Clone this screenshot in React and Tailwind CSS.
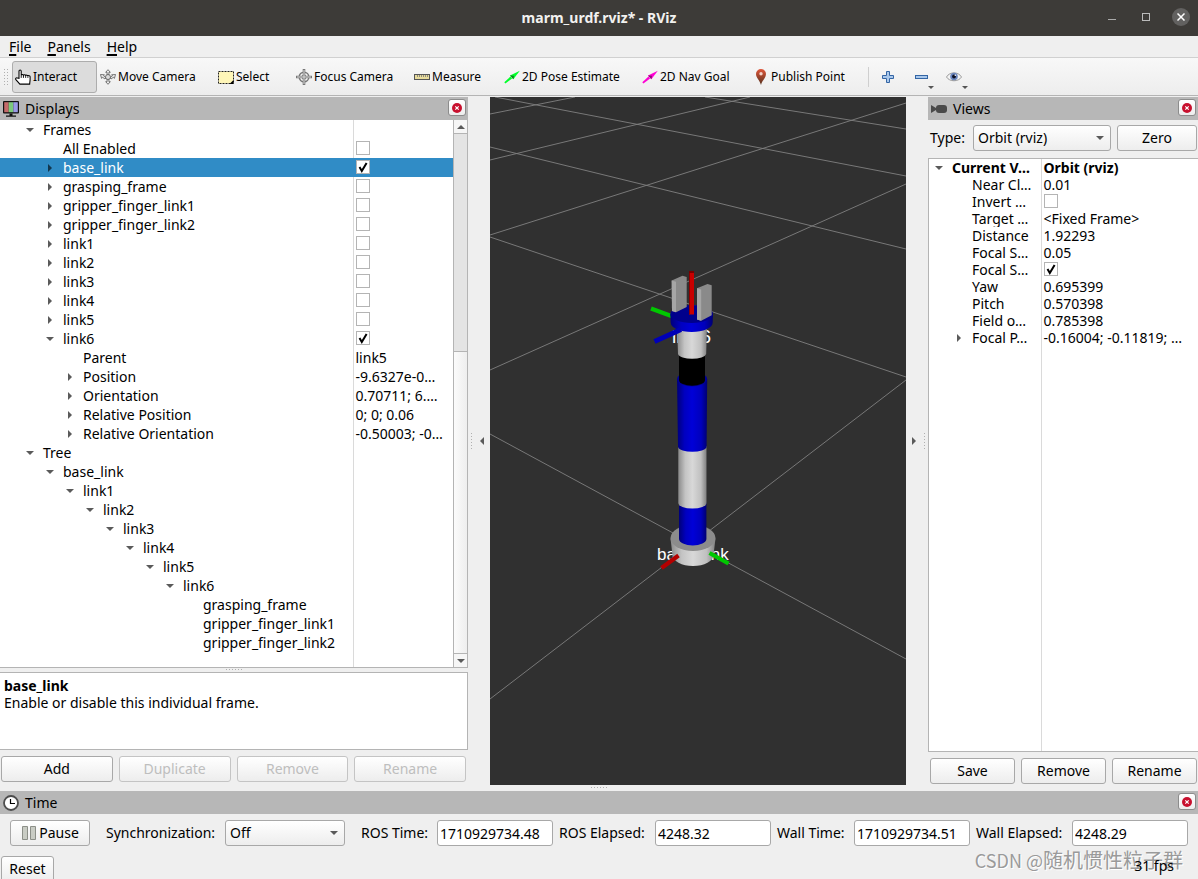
import React from "react";
import clsx from "clsx";

const frames = [
  { name: "Frames", depth: 0, arrow: "down" },
  { name: "All Enabled", depth: 1, check: false },
  { name: "base_link", depth: 1, arrow: "right", check: true, selected: true },
  { name: "grasping_frame", depth: 1, arrow: "right", check: false },
  { name: "gripper_finger_link1", depth: 1, arrow: "right", check: false },
  { name: "gripper_finger_link2", depth: 1, arrow: "right", check: false },
  { name: "link1", depth: 1, arrow: "right", check: false },
  { name: "link2", depth: 1, arrow: "right", check: false },
  { name: "link3", depth: 1, arrow: "right", check: false },
  { name: "link4", depth: 1, arrow: "right", check: false },
  { name: "link5", depth: 1, arrow: "right", check: false },
  { name: "link6", depth: 1, arrow: "down", check: true },
  { name: "Parent", depth: 2, value: "link5" },
  { name: "Position", depth: 2, arrow: "right", value: "-9.6327e-0…" },
  { name: "Orientation", depth: 2, arrow: "right", value: "0.70711; 6.…" },
  { name: "Relative Position", depth: 2, arrow: "right", value: "0; 0; 0.06" },
  {
    name: "Relative Orientation",
    depth: 2,
    arrow: "right",
    value: "-0.50003; -0…",
  },
  { name: "Tree", depth: 0, arrow: "down" },
  { name: "base_link", depth: 1, arrow: "down" },
  { name: "link1", depth: 2, arrow: "down" },
  { name: "link2", depth: 3, arrow: "down" },
  { name: "link3", depth: 4, arrow: "down" },
  { name: "link4", depth: 5, arrow: "down" },
  { name: "link5", depth: 6, arrow: "down" },
  { name: "link6", depth: 7, arrow: "down" },
  { name: "grasping_frame", depth: 8 },
  { name: "gripper_finger_link1", depth: 8 },
  { name: "gripper_finger_link2", depth: 8 },
];

const viewProps = [
  {
    name: "Current V…",
    depth: 0,
    arrow: "down",
    value: "Orbit (rviz)",
    bold: true,
  },
  { name: "Near Cl…", depth: 1, value: "0.01" },
  { name: "Invert …", depth: 1, check: false },
  { name: "Target …", depth: 1, value: "<Fixed Frame>" },
  { name: "Distance", depth: 1, value: "1.92293" },
  { name: "Focal S…", depth: 1, value: "0.05" },
  { name: "Focal S…", depth: 1, check: true },
  { name: "Yaw", depth: 1, value: "0.695399" },
  { name: "Pitch", depth: 1, value: "0.570398" },
  { name: "Field o…", depth: 1, value: "0.785398" },
  {
    name: "Focal P…",
    depth: 1,
    arrow: "right",
    value: "-0.16004; -0.11819; …",
  },
];

const indents = [
  "pl-0",
  "pl-5",
  "pl-10",
  "pl-15",
  "pl-20",
  "pl-25",
  "pl-30",
  "pl-35",
  "pl-40",
];

const Arrow = ({ dir = "down", className = "fill-[#5a5a5a]" }) => {
  const d = {
    down: "M3 5h8l-4 4z",
    up: "M3 9h8l-4-4z",
    right: "M5 3v8l4-4z",
    left: "M9 3v8l-4-4z",
  }[dir];
  return (
    <svg viewBox="0 0 14 14" className={clsx("size-3.5 shrink-0", className)}>
      <path d={d} />
    </svg>
  );
};

const CheckBox = ({ label, checked, className }) => (
  <label className={clsx("relative block size-3.5", className)}>
    <input
      type="checkbox"
      aria-label={label}
      defaultChecked={checked}
      className="peer block size-3.5 appearance-none border border-[#b4b4b4] bg-white"
    />
    <svg
      viewBox="0 0 14 14"
      className="pointer-events-none absolute inset-0 hidden size-3.5 peer-checked:block"
    >
      <path
        d="M3.5 7l2.3 4L10.6 3"
        fill="none"
        stroke="#000"
        strokeWidth="2"
      />
    </svg>
  </label>
);

const Grip = ({ vertical }) => (
  <svg
    viewBox={vertical ? "0 0 2 18" : "0 0 18 2"}
    className={clsx("fill-[#b0b0b0]", vertical ? "h-[18px] w-0.5" : "h-0.5 w-[18px]")}
  >
    {[1, 4, 7, 10, 13, 16].map((p) => (
      <rect
        key={p}
        x={vertical ? 0 : p}
        y={vertical ? p : 0}
        width="1"
        height="1"
      />
    ))}
  </svg>
);

const PropertyTree = ({ label, rows, nameCol, lead, rowClass, boxClass }) => (
  <table
    aria-label={label}
    className="h-full w-full table-fixed border-collapse"
  >
    <colgroup>
      <col className={nameCol} />
      <col />
    </colgroup>
    <tbody>
      {rows.map((r, i) => (
        <tr
          key={i}
          className={clsx(rowClass, r.selected && "bg-[#308cc6] text-white")}
        >
          <td
            className={clsx(
              "overflow-hidden border-r p-0 whitespace-nowrap",
              r.selected ? "border-[#308cc6]" : "border-[#dadada]",
              lead,
            )}
          >
            <div className={clsx("flex items-center", indents[r.depth])}>
              <span className="mr-1.5 w-3.5 shrink-0">
                {r.arrow && (
                  <Arrow
                    dir={r.arrow}
                    className={r.selected ? "fill-[#12374f]" : "fill-[#5a5a5a]"}
                  />
                )}
              </span>
              <span className={r.bold ? "font-bold" : ""}>{r.name}</span>
            </div>
          </td>
          <td
            className={clsx(
              "overflow-hidden p-0 pl-0.5 align-top whitespace-nowrap",
              r.bold && "font-bold",
            )}
          >
            {r.value}
            {r.check !== undefined && (
              <CheckBox
                label={r.name}
                checked={r.check}
                className={boxClass}
              />
            )}
          </td>
        </tr>
      ))}
      <tr>
        <td className="border-r border-[#dadada] p-0" />
        <td className="p-0" />
      </tr>
    </tbody>
  </table>
);

const Button = ({ children, className, disabled }) => (
  <button
    disabled={disabled}
    className={clsx(
      "flex h-[26px] items-center justify-center rounded-[3px] border bg-linear-to-b from-white to-[#ededed]",
      disabled ? "border-[#c4c4c4] text-[#bebebe]" : "border-[#a8a8a8]",
      className,
    )}
  >
    {children}
  </button>
);

const Select = ({ id, value, className }) => (
  <div className={clsx("relative", className)}>
    <select
      id={id}
      className="h-[26px] w-full appearance-none rounded-[3px] border border-[#a8a8a8] bg-linear-to-b from-white to-[#ededed] pl-1"
    >
      <option>{value}</option>
    </select>
    <span className="pointer-events-none absolute top-1.5 right-1">
      <Arrow />
    </span>
  </div>
);

const DockHeader = ({ icon, title }) => (
  <div className="flex h-[23px] shrink-0 items-center bg-[#b7b7b7] pr-0.5 pl-[3px]">
    {icon}
    <h2 className="ml-1.5 flex-1">{title}</h2>
    <button
      aria-label={`Close ${title}`}
      className="mb-0.5 flex h-[17px] w-[18px] items-center justify-center rounded-[3px] border border-[#8c8c8c] bg-linear-to-b from-white to-[#ededed]"
    >
      <svg viewBox="0 0 10 10" className="size-2.5">
        <circle cx="5" cy="5" r="5" fill="#c8102e" />
        <path d="M3.3 3.3l3.4 3.4M6.7 3.3L3.3 6.7" stroke="#fff" strokeWidth="1.2" />
      </svg>
    </button>
  </div>
);

const HandIcon = () => (
  <svg viewBox="0 0 18 18" className="size-4">
    <path
      d="M4.5 10.500V2.500C4.500 .8 7 .8 7 2.500V7c.3-1 2.200-1 2.500 0 .4-.8 2.200-.6 2.500.3.5-.6 2.200-.5 2.500.4.600-.5 2.500-.2 2.500 1V12l-.5 5H5.500L1 12C.200 10.800 1.500 9.300 2.700 10.200z"
      fill="#fff"
      stroke="#000"
      strokeWidth="1.2"
    />
    <path d="M7 7v3M9.500 7.500v2.500M12 8v2M14.500 8.500v1.500" stroke="#000" />
  </svg>
);

const MoveIcon = () => (
  <svg viewBox="0 0 16 16" className="size-4" fill="none" stroke="#555">
    <path d="M8 .700l2.300 2.600H8.900v2.800h-1.800V3.300H5.700zM8 15.300l2.300-2.600H8.900V9.900h-1.800v2.800H5.700z" strokeWidth=".8" />
    <path d="M.500 5.500l4 .300-1 1 2.500 2-1 1.200-2.500-1.800-.9 1.200zM15.500 5.500l-4 .300 1 1-2.500 2 1 1.200 2.500-1.800.9 1.200z" strokeWidth=".8" />
    <circle cx="8" cy="8" r="2.500" fill="#ddd" strokeWidth=".8" />
  </svg>
);

const SelectIcon = () => (
  <svg viewBox="0 0 16 16" className="size-4">
    <rect x=".5" y="2.500" width="15" height="12" fill="#fff6b8" stroke="#222" strokeDasharray="2 1" />
    <path d="M15.500 11v4h-4z" />
  </svg>
);

const FocusIcon = () => (
  <svg viewBox="0 0 16 16" className="size-4" fill="none" stroke="#777">
    <circle cx="8" cy="8" r="4.800" strokeWidth="1.400" />
    <circle cx="8" cy="8" r="2" />
    <path d="M8 0v16M0 8h16" strokeWidth="2.600" />
    <path d="M8 1v14M1 8h14" stroke="#e2e2e2" strokeWidth=".9" />
  </svg>
);

const RulerIcon = () => (
  <svg viewBox="0 0 16 16" className="size-4">
    <rect x=".5" y="5.500" width="15" height="5" fill="#e8dc9c" stroke="#555" />
    <path d="M3.500 6v2M5.500 6v2M7.500 6v2M9.500 6v2M11.500 6v2M13.500 6v2" stroke="#777" strokeWidth=".8" />
  </svg>
);

const NeedleIcon = ({ color, dark }) => (
  <svg viewBox="0 0 16 16" className="size-4">
    <path d="M.300 13.300L6.500 7.500l1.600 2L1.400 14.600z" fill={color} />
    <path d="M6 6.500L15.800 1.700 9.400 10.300z" fill={color} />
    <path d="M6 6.500l3.400 3.800.6-3.600z" fill={dark} />
  </svg>
);

const PinIcon = () => (
  <svg viewBox="0 0 16 16" className="size-4">
    <defs>
      <linearGradient id="pin" x1="0" y1="0" x2="0" y2="1">
        <stop offset="0" stopColor="#e0563a" />
        <stop offset="1" stopColor="#54301c" />
      </linearGradient>
    </defs>
    <path d="M8 16C7 11.500 3 9 3 5a5 5 0 0 1 10 0c0 4-4 6.500-5 11z" fill="url(#pin)" />
    <circle cx="8" cy="4.800" r="1.700" fill="#f3d3cb" />
  </svg>
);

const tools = [
  { label: "Interact", icon: <HandIcon />, width: "w-[85px]", active: true },
  { label: "Move Camera", icon: <MoveIcon />, width: "w-[118px]" },
  { label: "Select", icon: <SelectIcon />, width: "w-[78px]" },
  { label: "Focus Camera", icon: <FocusIcon />, width: "w-[118px]" },
  { label: "Measure", icon: <RulerIcon />, width: "w-[90px]" },
  {
    label: "2D Pose Estimate",
    icon: <NeedleIcon color="#00ff2a" dark="#0a8a1c" />,
    width: "w-[138px]",
  },
  {
    label: "2D Nav Goal",
    icon: <NeedleIcon color="#ff00d4" dark="#8c0a76" />,
    width: "w-[111px]",
  },
  { label: "Publish Point", icon: <PinIcon />, width: "w-[115px]" },
];

const TitleBar = () => (
  <header className="grid h-9 shrink-0 grid-cols-[1fr_auto_1fr] items-center bg-[#3d3b38] text-white">
    <h1 className="col-start-2 text-sm font-bold text-[#f2f1ef]">
      marm_urdf.rviz* - RViz
    </h1>
    <div className="flex items-center justify-end gap-[18px] pr-2 pb-0.5">
      <button aria-label="Minimize" className="flex size-4 items-center justify-center">
        <svg viewBox="0 0 8 8" className="size-2">
          <path d="M0 6.500h8" stroke="#aaa" />
        </svg>
      </button>
      <button aria-label="Maximize" className="flex size-4 items-center justify-center">
        <svg viewBox="0 0 8 8" className="size-2">
          <rect x=".5" y=".5" width="7" height="7" fill="none" stroke="#bbb" />
        </svg>
      </button>
      <button
        aria-label="Close"
        className="flex size-[18px] items-center justify-center rounded-full bg-[#626160]"
      >
        <svg viewBox="0 0 8 8" className="size-2">
          <path d="M.5.5l7 7M7.500.5l-7 7" stroke="#fff" strokeWidth="1.500" />
        </svg>
      </button>
    </div>
  </header>
);

const MenuBar = () => (
  <nav className="flex h-[22px] shrink-0 items-center gap-4 border-b border-[#d0d0d0] pl-[9px]">
    {["File", "Panels", "Help"].map((m) => (
      <button key={m}>
        <span className="underline decoration-2 underline-offset-2">{m[0]}</span>
        {m.slice(1)}
      </button>
    ))}
  </nav>
);

const ToolBar = () => (
  <div className="flex h-[38px] shrink-0 items-center border-b border-[#b4b4b4] bg-linear-to-b from-[#f8f8f8] to-[#ededed] pl-1">
    <div className="mr-[3px] flex gap-[1px]">
      <Grip vertical />
      <Grip vertical />
    </div>
    {tools.map((t) => (
      <button
        key={t.label}
        className={clsx(
          "flex h-8 shrink-0 items-center gap-0.5 rounded-[3px] border pl-0.5 text-xs whitespace-nowrap",
          t.width,
          t.active ? "border-[#adadad] bg-[#dcdcdc]" : "border-transparent",
        )}
      >
        {t.icon}
        <span className="pt-px">{t.label}</span>
      </button>
    ))}
    <div className="mx-[3px] h-5 w-px bg-[#cfcfcf]" />
    <div className="flex pl-[9px]">
      <button aria-label="Add tool" className="mr-[19px] size-3.5">
        <svg viewBox="0 0 14 14">
          <path
            d="M5.500 1.500h3v4h4v3h-4v4h-3v-4h-4v-3h4z"
            fill="#a9c8ec"
            stroke="#3465a4"
          />
        </svg>
      </button>
      <button aria-label="Remove tool" className="relative mr-[18px] size-3.5">
        <svg viewBox="0 0 14 14">
          <rect x="1.500" y="5.500" width="12" height="3" fill="#a9c8ec" stroke="#3465a4" />
        </svg>
        <svg viewBox="0 0 6 3" className="absolute top-4 left-3.5 h-[3px] w-1.5">
          <path d="M0 0h6L3 3z" fill="#555" />
        </svg>
      </button>
      <button aria-label="Tool visibility" className="relative h-3.5 w-4">
        <svg viewBox="0 0 16 14">
          <path d="M.5 7C3.500 1.500 12.500 1.500 15.500 7c-3 5-12 5-15 0z" fill="#f4f4f4" stroke="#9a9a9a" />
          <circle cx="8" cy="6.500" r="3.800" fill="#6b86bd" />
          <circle cx="8" cy="6.500" r="1.900" fill="#0c0f24" />
          <circle cx="9.300" cy="5.200" r=".8" fill="#fff" />
        </svg>
        <svg viewBox="0 0 6 3" className="absolute top-4 left-4 h-[3px] w-1.5">
          <path d="M0 0h6L3 3z" fill="#555" />
        </svg>
      </button>
    </div>
  </div>
);

const MonitorIcon = () => (
  <svg viewBox="0 0 16 16" className="size-4">
    <rect width="16" height="12.500" rx="1" fill="#111" />
    <rect x="1.200" y="1.200" width="4.500" height="10" fill="#c46a6a" />
    <rect x="5.700" y="1.200" width="4.600" height="10" fill="#7cc97c" />
    <rect x="10.300" y="1.200" width="4.500" height="10" fill="#9a9ae6" />
    <path d="M6.500 12.500h3v2H13v1.300H3v-1.300h3.500z" fill="#111" />
  </svg>
);

const CameraIcon = () => (
  <svg viewBox="0 0 16 16" className="size-4 fill-[#4a4a4a]">
    <path d="M0 4l5 3v2l-5 3z" />
    <rect x="5" y="4" width="11" height="8" rx="3" />
  </svg>
);

const ClockIcon = () => (
  <svg viewBox="0 0 16 16" className="size-4">
    <circle cx="8" cy="8" r="7" fill="#fff" stroke="#4d4d4d" strokeWidth="1.800" />
    <path d="M7.500 4v4.500H12" fill="none" stroke="#000" strokeWidth="1.200" />
  </svg>
);

const DisplaysPanel = () => (
  <section className="flex w-[468px] shrink-0 flex-col">
    <DockHeader icon={<MonitorIcon />} title="Displays" />
    <div className="flex min-h-0 flex-1 border-b border-[#b4b4b4] bg-white">
      <div className="min-w-0 flex-1">
        <PropertyTree
          label="Displays"
          rows={frames}
          nameCol="w-[353px]"
          lead="pl-[23px]"
          rowClass="h-[19px] leading-[19px]"
          boxClass="mt-0.5"
        />
      </div>
      <div className="flex w-[15px] shrink-0 flex-col border-x border-[#b4b4b4] bg-[#e4e4e4]">
        <button
          aria-label="Scroll up"
          className="flex h-3.5 items-center justify-center border-b border-[#b4b4b4] bg-[#f6f6f6]"
        >
          <Arrow dir="up" />
        </button>
        <div className="flex-[217]" />
        <div className="flex-[302] border-t border-[#b4b4b4] bg-linear-to-r from-[#fbfbfb] to-[#eeeeee]" />
        <button
          aria-label="Scroll down"
          className="flex h-3.5 items-center justify-center border-t border-[#b4b4b4] bg-[#f6f6f6]"
        >
          <Arrow />
        </button>
      </div>
    </div>
    <div className="flex h-1 items-center justify-center">
      <Grip />
    </div>
    <div className="h-[78px] shrink-0 border border-l-0 border-[#b4b4b4] bg-white p-1 leading-[17px]">
      <p className="font-bold">base_link</p>
      <p>Enable or disable this individual frame.</p>
    </div>
    <div className="flex gap-1.5 pt-1.5 pr-0.5 pb-[3px] pl-px">
      <Button className="flex-1">Add</Button>
      <Button className="flex-1" disabled>
        Duplicate
      </Button>
      <Button className="flex-1" disabled>
        Remove
      </Button>
      <Button className="flex-1" disabled>
        Rename
      </Button>
    </div>
  </section>
);

// ground grid, one entry per visible line
const gridLines = [
  [5, 0, 416, 79],
  [215, 0, 416, 32],
  [0, 50, 416, 152],
  [0, 140, 416, 280],
  [0, 337, 416, 562],
  [0, 17, 85, 0],
  [0, 63, 260, 0],
  [0, 138, 416, 6],
  [0, 273, 416, 87],
  [0, 602, 416, 283],
];

const Viewport = () => (
  <main className="relative min-w-0 flex-1 bg-[#303030]">
    <svg
      viewBox="0 0 416 688"
      preserveAspectRatio="xMidYMid slice"
      className="absolute inset-0 size-full"
    >
      <defs>
        <linearGradient id="white">
          <stop offset="0" stopColor="#8a8a8a" />
          <stop offset=".25" stopColor="#c4c4c4" />
          <stop offset=".5" stopColor="#d8d8d8" />
          <stop offset=".8" stopColor="#c0c0c0" />
          <stop offset="1" stopColor="#808080" />
        </linearGradient>
        <linearGradient id="blue">
          <stop offset="0" stopColor="#000078" />
          <stop offset=".25" stopColor="#0000c0" />
          <stop offset=".5" stopColor="#0000d8" />
          <stop offset=".8" stopColor="#0000bc" />
          <stop offset="1" stopColor="#000070" />
        </linearGradient>
      </defs>
      <g stroke="#808080" strokeWidth=".9">
        {gridLines.map(([x1, y1, x2, y2], i) => (
          <line key={i} x1={x1} y1={y1} x2={x2} y2={y2} />
        ))}
      </g>

      <g fill="#fff" fontFamily="Liberation Sans, sans-serif">
        <text x="167" y="463" fontSize="17">
          base_link
        </text>
        <text x="182" y="246" fontSize="19">
          link6
        </text>
      </g>

      {/* base */}
      <path d="M180.500 441.500L182.500 458a20.500 11 0 0 0 41 0l2-16.500z" fill="url(#white)" />
      <ellipse cx="203" cy="441" rx="22.500" ry="13" fill="#8c8c8c" />
      <path d="M189 405v37a13.700 6.500 0 0 0 27.400 0v-37z" fill="url(#blue)" />
      <path d="M188.300 349v57a14 5.500 0 0 0 28.200 0v-57z" fill="url(#white)" />
      <path d="M187 282l1 68a14.400 5.500 0 0 0 28.600 0l.6-68z" fill="url(#blue)" />
      <ellipse cx="202.100" cy="282" rx="15" ry="7.500" fill="#000096" />
      <path d="M189 256v27a13 5.800 0 0 0 26 0v-27z" fill="#000" />
      <path d="M187 228l1 29a14.200 5.500 0 0 0 28.200 0l.8-29z" fill="url(#white)" />

      {/* gripper flange */}
      <path d="M161 211.500L184 220" stroke="#00c800" strokeWidth="4.200" />
      <path d="M180.300 217l.4 8.500a21 9.500 0 0 0 42 0l.3-8.500z" fill="url(#blue)" />
      <ellipse cx="201.700" cy="217" rx="21.300" ry="9" fill="#00008c" />
      <path d="M164.500 244.500L191 232.500" stroke="#0000b8" strokeWidth="5" />
      <path d="M181.700 183.500L192.500 178.800l4.200 1.200v30L186 215.300l-4-1.300z" fill="#8a8a8a" />
      <path d="M181.700 183.500l4.300 1.300v30.500l-4-1.300z" fill="#a6a6a6" />
      <rect x="199" y="174" width="5" height="43.500" fill="#c80000" />
      <rect x="199" y="174" width="1" height="43.500" fill="#8c0000" />
      <path d="M199 174h5v2h-5z" fill="#7a0000" />
      <path d="M207 191.300l10.500-4.300 4.200 1.200v30l-10.500 5.500-4.200-1.300z" fill="#8a8a8a" />
      <path d="M207 191.300l4.200 1.200v31.200L207 222.400z" fill="#a6a6a6" />

      {/* base axes */}
      <path d="M171.500 471L188.500 458.500" stroke="#b40000" strokeWidth="4.200" />
      <path d="M219.500 456L238.500 466.500" stroke="#00c800" strokeWidth="4.200" />
    </svg>
  </main>
);

const Splitter = ({ dir }) => (
  <button
    aria-label={dir === "left" ? "Hide left panels" : "Hide right panels"}
    className={clsx(
      "flex w-[22px] shrink-0 items-center justify-between",
      dir === "left" ? "pr-px pl-[3px]" : "flex-row-reverse pr-0.5 pl-px",
    )}
  >
    <Grip vertical />
    <Arrow dir={dir} />
  </button>
);

const ViewsPanel = () => (
  <section className="flex w-[270px] shrink-0 flex-col">
    <DockHeader icon={<CameraIcon />} title="Views" />
    <div className="flex items-center py-[5px] pr-px pl-0.5">
      <label htmlFor="view-type" className="w-[43px]">
        Type:
      </label>
      <Select id="view-type" value="Orbit (rviz)" className="w-[138px]" />
      <Button className="ml-1.5 flex-1">Zero</Button>
    </div>
    <div className="mt-0.5 min-h-0 flex-1 border border-r-0 border-[#b4b4b4] bg-white">
      <PropertyTree
        label="Views"
        rows={viewProps}
        nameCol="w-[112px]"
        lead="pl-[3px]"
        rowClass="h-[17px] leading-[17px]"
        boxClass="mt-px"
      />
    </div>
    <div className="flex gap-1.5 pt-1.5 pr-px pb-px pl-0.5">
      <Button className="flex-1">Save</Button>
      <Button className="flex-1">Remove</Button>
      <Button className="flex-1">Rename</Button>
    </div>
  </section>
);

const clocks = [
  { id: "ros-time", label: "ROS Time:", value: "1710929734.48", width: "w-[76px]" },
  { id: "ros-elapsed", label: "ROS Elapsed:", value: "4248.32", width: "w-24" },
  { id: "wall-time", label: "Wall Time:", value: "1710929734.51", width: "w-[77px]" },
  { id: "wall-elapsed", label: "Wall Elapsed:", value: "4248.29", width: "w-24" },
];

const TimePanel = () => (
  <section className="flex h-[88px] shrink-0 flex-col">
    <DockHeader icon={<ClockIcon />} title="Time" />
    <div className="flex shrink-0 items-center gap-4 px-2.5 pt-1.5">
      <Button className="w-20 gap-0.5">
        <svg viewBox="0 0 16 16" className="size-4">
          <path
            d="M1.500 1.500h5v13h-5zM9.500 1.500h5v13h-5z"
            fill="#c9ccc4"
            stroke="#8c8f88"
          />
        </svg>
        Pause
      </Button>
      <div className="flex items-center">
        <label htmlFor="sync" className="w-[119px] whitespace-nowrap">
          Synchronization:
        </label>
        <Select id="sync" value="Off" className="w-30" />
      </div>
      <div className="flex min-w-0 flex-1 items-center gap-1.5">
        {clocks.map((c) => (
          <div key={c.id} className="flex min-w-0 flex-1 basis-auto items-center">
            <label htmlFor={c.id} className={clsx("shrink-0 whitespace-nowrap", c.width)}>
              {c.label}
            </label>
            <input
              id={c.id}
              readOnly
              value={c.value}
              size="1"
              className="h-[26px] w-0 min-w-0 flex-1 rounded-[3px] border border-[#a8a8a8] bg-white px-0.5"
            />
          </div>
        ))}
      </div>
    </div>
    <div className="relative flex shrink-0 justify-between pt-2.5 pr-6 pl-px">
      <Button className="w-[53px]">Reset</Button>
      <p className="absolute top-0 right-[15px] font-['Noto_Sans_CJK_SC',sans-serif] text-xl leading-7 whitespace-nowrap text-[#9a9a9a] [text-shadow:1px_1px_0_#fff]">
        <span className="text-lg">CSDN @</span>随机惯性粒子群
      </p>
      <span className="relative leading-5">31 fps</span>
    </div>
  </section>
);

export default function App() {
  return (
    <div className="flex h-screen flex-col overflow-hidden bg-[#efefef] font-['Noto_Sans',sans-serif] text-sm text-black">
      <TitleBar />
      <MenuBar />
      <ToolBar />
      <div className="flex min-h-0 flex-1 pt-px">
        <DisplaysPanel />
        <Splitter dir="left" />
        <Viewport />
        <Splitter dir="right" />
        <ViewsPanel />
      </div>
      <div className="flex h-1.5 shrink-0 justify-center pt-0.5">
        <Grip />
      </div>
      <TimePanel />
    </div>
  );
}
